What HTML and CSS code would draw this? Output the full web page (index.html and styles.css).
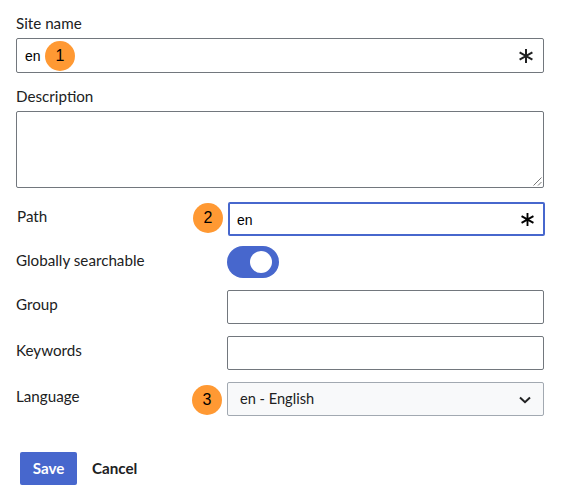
FILE: index.html
```html
<!DOCTYPE html>
<html lang="en">

<head>
    <meta charset="UTF-8">
    <meta name="viewport" content="width=device-width, initial-scale=1.0">
    <title>Site settings</title>
    <link rel="stylesheet" href="styles.css">
</head>

<body>
    <form class="site-form">
        <div class="stacked">
            <label class="stacked-label">Site name</label>
            <div class="field field-top">
                <span class="field-text">en</span>
                <svg class="required" viewBox="0 0 14 14"><path d="M7 0V14M0.6 3.4L13.4 10.6M13.4 3.4L0.6 10.6" /></svg>
                <span class="badge badge-name">1</span>
            </div>
        </div>

        <div class="stacked stacked-desc">
            <label class="stacked-label">Description</label>
            <div class="field field-area">
                <svg class="grip" viewBox="0 0 9 9"><path d="M0.5 8.5L8.5 0.5M5 8.5L8.5 5" /></svg>
            </div>
        </div>

        <div class="row row-path">
            <label class="row-label label-path">Path</label>
            <div class="field field-focus">
                <span class="field-text">en</span>
                <svg class="required required-dark" viewBox="0 0 14 14"><path d="M7 0V14M0.6 3.4L13.4 10.6M13.4 3.4L0.6 10.6" /></svg>
                <span class="badge badge-side">2</span>
            </div>
        </div>

        <div class="row row-toggle">
            <label class="row-label">Globally searchable</label>
            <div class="toggle"><span class="knob"></span></div>
        </div>

        <div class="row">
            <label class="row-label">Group</label>
            <div class="field"></div>
        </div>

        <div class="row">
            <label class="row-label">Keywords</label>
            <div class="field"></div>
        </div>

        <div class="row">
            <label class="row-label">Language</label>
            <div class="field field-select">
                <span class="select-text">en - English</span>
                <svg class="chevron" viewBox="0 0 12 8"><path d="M1 1.5L6 6.2L11 1.5" /></svg>
                <span class="badge badge-side badge-lang">3</span>
            </div>
        </div>

        <div class="actions">
            <button type="button" class="btn-save">Save</button>
            <button type="button" class="btn-cancel">Cancel</button>
        </div>
    </form>
</body>

</html>
```

FILE: styles.css
```css
* {
    box-sizing: border-box;
}

body {
    margin: 0;
    background: #fff;
    color: #202122;
    font-family: Lato, "Liberation Sans", sans-serif;
    font-size: 15.2px;
}

.site-form {
    width: 544px;
    padding: 14px 0 0 16px;
}

.stacked-label {
    display: block;
    height: 24px;
    line-height: 18px;
}

.stacked-desc {
    margin-top: 14px;
}

.field {
    position: relative;
    flex: 1;
    height: 34px;
    display: flex;
    align-items: center;
    border: 1px solid #72777d;
    border-radius: 2px;
    background: #fff;
}

.field-top {
    height: 35px;
}

.field-text {
    padding-left: 8px;
    color: #000;
    font-family: "Liberation Sans", sans-serif;
    font-size: 14px;
}

.field-area {
    height: 77px;
}

.field-focus {
    border: 2px solid #4767cd;
    margin: 0 -1px 0 1px;
}

.field-focus .field-text {
    padding: 1px 0 0 7px;
}

.required {
    position: absolute;
    right: 10px;
    top: 10px;
    width: 14px;
    height: 14px;
    fill: none;
    stroke: #202122;
    stroke-width: 2;
}

.required-dark {
    right: 9px;
    top: 9px;
    width: 13px;
    height: 13px;
    stroke: #000;
}

.grip {
    position: absolute;
    right: 1px;
    bottom: 1px;
    width: 9px;
    height: 9px;
    fill: none;
    stroke: #777;
    stroke-width: 1;
}

.badge {
    position: absolute;
    width: 30px;
    height: 30px;
    padding-bottom: 1px;
    border-radius: 50%;
    display: flex;
    justify-content: center;
    align-items: center;
    background: #ff9933;
    color: #000;
    font-family: "Liberation Sans", sans-serif;
    font-size: 16px;
}

.badge-name {
    left: 28px;
    top: 2px;
}

.badge-side {
    left: -37px;
    top: -1px;
}

.badge-lang {
    left: -36px;
    top: 2px;
}

.row {
    display: flex;
    align-items: flex-start;
    margin-top: 12px;
}

.row-path {
    margin-top: 14px;
}

.row-toggle {
    margin-top: 10px;
}

.row-label {
    width: 211px;
    flex: none;
    line-height: 18px;
    padding-top: 5px;
}

.label-path {
    width: 211px;
    padding-left: 1px;
}

.toggle {
    width: 52px;
    height: 32px;
    border-radius: 16px;
    background: #4767cd;
    display: flex;
    align-items: center;
    justify-content: flex-end;
    padding-right: 7px;
}

.knob {
    width: 22px;
    height: 22px;
    border-radius: 50%;
    background: #fff;
}

.field-select {
    border-color: #a2a9b1;
    background: #f8f9fa;
}

.select-text {
    padding: 0 0 2px 12px;
    font-size: 14.6px;
}

.chevron {
    position: absolute;
    right: 12px;
    top: 13px;
    width: 12px;
    height: 8px;
    fill: none;
    stroke: #202122;
    stroke-width: 2;
}

.actions {
    display: flex;
    align-items: center;
    margin: 36px 0 0 4px;
}

.btn-save {
    width: 57px;
    height: 33px;
    padding: 0 0 2px;
    border: 0;
    border-radius: 2px;
    background: #4767cd;
    color: #fff;
    font-family: inherit;
    font-size: 15.2px;
    font-weight: 700;
}

.btn-cancel {
    margin-left: 15px;
    padding: 0 0 2px;
    border: 0;
    background: none;
    color: #202122;
    font-family: inherit;
    font-size: 15.2px;
    font-weight: 700;
}
```
